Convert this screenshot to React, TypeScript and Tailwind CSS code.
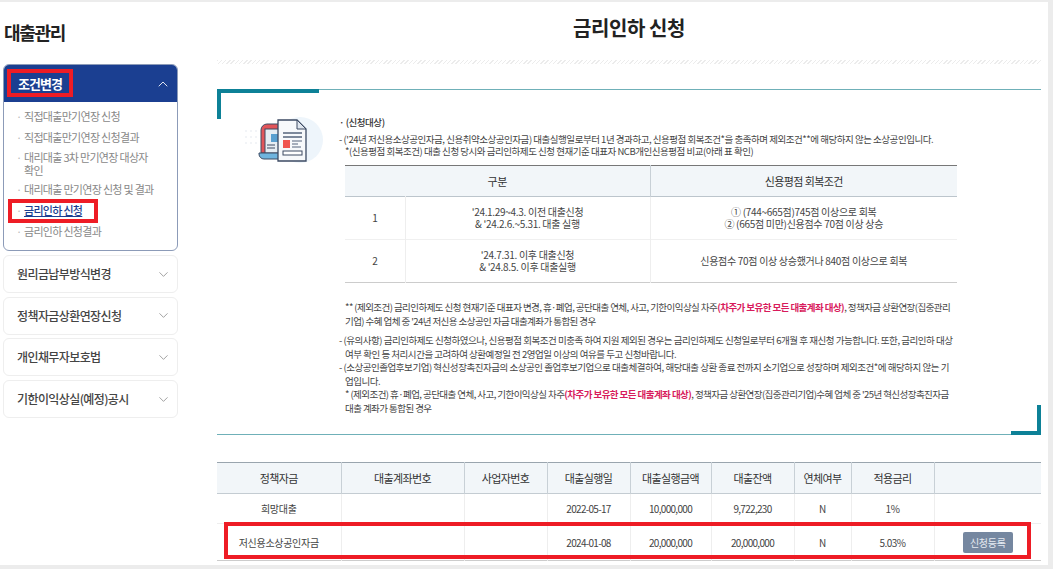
import { ChevronDown, ChevronUp } from 'lucide-react';

const font = { fontFamily: '"Noto Sans CJK KR", "Noto Sans", sans-serif' };

const subMenu = [
    { label: '직접대출만기연장 신청' },
    { label: '직접대출만기연장 신청결과' },
    { label: '대리대출 3차 만기연장 대상자 확인' },
    { label: '대리대출 만기연장 신청 및 결과' },
    { label: '금리인하 신청', active: true },
    { label: '금리인하 신청결과' },
];

const closedMenu = ['원리금납부방식변경', '정책자금상환연장신청', '개인채무자보호법', '기한이익상실(예정)공시'];

const loans = [
    { name: '희망대출', date: '2022-05-17', amount: '10,000,000', balance: '9,722,230', overdue: 'N', rate: '1%' },
    { name: '저신용소상공인자금', date: '2024-01-08', amount: '20,000,000', balance: '20,000,000', overdue: 'N', rate: '5.03%', apply: true },
];

const DocIcon = () => (
    <svg width="86" height="50" viewBox="-10 0 86 50" fill="none">
        <circle cx="46" cy="25" r="23" fill="#eef5fb" />
        <g fill="#eef1f4">
            <circle cx="-8" cy="16" r="1" /><circle cx="-3" cy="16" r="1" /><circle cx="2" cy="16" r="1" />
            <circle cx="-8" cy="22" r="1" /><circle cx="-3" cy="22" r="1" /><circle cx="2" cy="22" r="1" />
            <circle cx="-8" cy="28" r="1" /><circle cx="-3" cy="28" r="1" /><circle cx="2" cy="28" r="1" />
        </g>
        <path d="M7 38V15a6 6 0 0 1 6-6h12v29z" fill="#e2555a" stroke="#3c4a63" strokeWidth="1" />
        <rect x="11" y="14" width="14" height="24" fill="#e6edf3" stroke="#3c4a63" strokeWidth="1" />
        <rect x="17" y="19" width="7" height="8" fill="#5aa0d0" />
        <path d="M13 30h8M13 33h8" stroke="#3c4a63" strokeWidth="1" />
        <path d="M5 38h20v6H10a5 5 0 0 1-5-5z" fill="#6fb4de" stroke="#3c4a63" strokeWidth="1" />
        <path d="M24 5h19l9 9v32H24z" fill="#f7f9fb" stroke="#3c4a63" strokeWidth="1.3" />
        <path d="M43 5v9h9z" fill="#dfe6ee" stroke="#3c4a63" strokeWidth="1" />
        <path d="M29 18h19M29 22h19" stroke="#56647c" strokeWidth="1.3" />
        <rect x="29" y="25" width="7" height="8" fill="#f0554f" />
        <path d="M38 26h10M38 29h6M38 32h9" stroke="#56647c" strokeWidth="1" />
        <rect x="29" y="36" width="19" height="4" fill="#fff" stroke="#3c4a63" strokeWidth="1" />
    </svg>
);

const App = () => {
    return (
        <div className="w-[1053px] h-[569px] overflow-hidden bg-[#ececec] pt-[2px] pr-[5px] pb-[4px] text-[#333]" style={font}>
            <div className="relative flex h-full bg-white">
                <aside className="w-[217px] shrink-0 pl-[3px] pt-[17px]">
                    <h2 className="h-[27px] pl-[1px] text-[18px] leading-[27px] font-bold text-[#222] tracking-[-1.3px]">대출관리</h2>
                    <div className="mt-[18px] w-[175px] rounded-[6px] border border-[#8c9bb8] overflow-hidden">
                        <div className="flex h-[37px] items-center justify-between bg-[#1b3f91] pl-[14px] pr-[6px] text-white">
                            <span className="text-[13px] font-bold tracking-[-1px]">조건변경</span>
                            <ChevronUp size={16} strokeWidth={1.3} />
                        </div>
                        <ul className="pl-[12px] pr-[18px] pt-[4px] pb-[8px]">
                            {subMenu.map(item => (
                                <li key={item.label} className={`relative break-keep pl-[8px] text-[11px] leading-[13px] tracking-[-0.7px] ${item.label.includes('3차') ? 'py-[2.5px]' : 'py-[4px]'}`}>
                                    <span className="absolute left-0 text-[#bbb]">·</span>
                                    <span className={item.active ? 'font-medium text-[#1b3f91] underline' : 'text-[#888]'}>{item.label}</span>
                                </li>
                            ))}
                        </ul>
                    </div>
                    <div className="mt-[4px] flex w-[175px] flex-col gap-[3.7px]">
                        {closedMenu.map(label => (
                            <div key={label} className="flex h-[38px] items-center justify-between rounded-[6px] border border-[#eeeeee] pl-[13px] pr-[6px]">
                                <span className="text-[12px] font-medium text-[#444] tracking-[-0.6px]">{label}</span>
                                <ChevronDown size={15} strokeWidth={1.1} className="text-[#777]" />
                            </div>
                        ))}
                    </div>
                </aside>

                <main className="flex-1 min-w-0 pr-[7px]">
                    <h1 className="h-[58px] pt-[12px] text-center text-[20px] leading-[27px] font-bold text-[#222] tracking-[-0.4px]">금리인하 신청</h1>
                    <div className="h-[4px] bg-[repeating-linear-gradient(135deg,#ececec_0px,#ececec_1px,#ffffff_1px,#ffffff_3px)]" />

                    <section className="relative mt-[25px] h-[346px] border-y border-[#6fb0b8]">
                        <span className="absolute -top-px left-0 h-[4px] w-[102px] bg-[#0d8197]" />
                        <span className="absolute -top-px left-0 h-[30px] w-[4px] bg-[#0d8197]" />
                        <span className="absolute -bottom-px right-0 h-[30px] w-[4px] bg-[#0d8197]" />
                        <span className="absolute -bottom-px right-0 h-[4px] w-[30px] bg-[#0d8197]" />

                        <div className="flex">
                            <div className="w-[117px] shrink-0 pt-[25px] pl-[27px]"><DocIcon /></div>
                            <div className="w-[622px] pt-[26px] text-[9.5px] leading-[12px] tracking-[-0.47px] text-[#444]">
                                <p className="pl-[5px] font-medium text-[#333]">· (신청대상)</p>
                                <p className="mt-[5px] pl-[5px]">- ('24년 저신용소상공인자금, 신용취약소상공인자금) 대출실행일로부터 1년 경과하고, 신용평점 회복조건*을 충족하며 제외조건**에 해당하지 않는 소상공인입니다.</p>
                                <p className="pl-[11px]">*(신용평점 회복조건) 대출 신청 당시와 금리인하제도 신청 현재기준 대표자 NCB개인신용평점 비교(아래 표 확인)</p>

                                <table className="mt-[8px] ml-[11px] w-[612px] table-fixed border-t border-b border-t-[#777] border-b-[#ccc] text-center text-[10px] tracking-[-0.3px]">
                                    <colgroup>
                                        <col className="w-[60px]" />
                                        <col className="w-[245px]" />
                                        <col />
                                    </colgroup>
                                    <thead>
                                        <tr className="h-[31px] border-b border-[#bcc5cc] bg-[#f2f6f9] text-[11px] text-[#333]">
                                            <th colSpan={2} className="font-normal border-r border-[#c8d0d6]">구분</th>
                                            <th className="font-normal tracking-[-0.6px]">신용평점 회복조건</th>
                                        </tr>
                                    </thead>
                                    <tbody>
                                        <tr className="h-[43px] border-b border-[#f0f0f0]">
                                            <td className="border-r border-[#eeeeee]">1</td>
                                            <td className="border-r border-[#eeeeee]">'24.1.29~4.3. 이전 대출신청<br />& '24.2.6.~5.31. 대출 실행</td>
                                            <td>① (744~665점)745점 이상으로 회복<br />② (665점 미만)신용점수 70점 이상 상승</td>
                                        </tr>
                                        <tr className="h-[43px]">
                                            <td className="border-r border-[#eeeeee]">2</td>
                                            <td className="border-r border-[#eeeeee]">'24.7.31. 이후 대출신청<br />& '24.8.5. 이후 대출실행</td>
                                            <td>신용점수 70점 이상 상승했거나 840점 이상으로 회복</td>
                                        </tr>
                                    </tbody>
                                </table>

                                <div className="mt-[18px] pl-[11px] leading-[13.5px] tracking-[-0.56px]">
                                    <p>** (제외조건) 금리인하제도 신청 현재기준 대표자 변경, 휴·폐업, 공단대출 연체, 사고, 기한이익상실 차주<b className="font-bold text-[#d81b5c]">(차주가 보유한 모든 대출계좌 대상)</b>, 정책자금 상환연장(집중관리<wbr />기업) 수혜 업체 중 '24년 저신용 소상공인 자금 대출계좌가 통합된 경우</p>
                                    <p className="mt-[6px] -indent-[6px] tracking-[-0.47px]">- (유의사항) 금리인하제도 신청하였으나, 신용평점 회복조건 미충족 하여 지원 제외된 경우는 금리인하제도 신청일로부터 6개월 후 재신청 가능합니다. 또한, 금리인하 대상 여부 확인 등 처리시간을 고려하여 상환예정일 전 2영업일 이상의 여유를 두고 신청바랍니다.</p>
                                    <p className="-indent-[6px] tracking-[-0.47px]">- (소상공인졸업후보기업) 혁신성장촉진자금의 소상공인 졸업후보기업으로 대출체결하여, 해당대출 상환 종료 전까지 소기업으로 성장하며 제외조건*에 해당하지 않는 기업입니다.</p>
                                    <p>* (제외조건) 휴·폐업, 공단대출 연체, 사고, 기한이익상실 차주<b className="font-bold text-[#d81b5c]">(차주가 보유한 모든 대출계좌 대상)</b>, 정책자금 상환연장(집중관리기업)수혜 업체 중 '25년 혁신성장촉진자금 대출 계좌가 통합된 경우</p>
                                </div>
                            </div>
                        </div>
                    </section>

                    <table className="mt-[27px] w-full table-fixed border-t border-b border-t-[#9aa5ae] border-b-[#ccc] text-center text-[10px] tracking-[-0.3px] text-[#444]">
                        <thead>
                            <tr className="h-[31px] border-b border-[#c4ccd2] bg-[#f2f6f9] text-[11px] tracking-[-0.6px] text-[#333]">
                                <th className="w-[124px] font-normal border-r border-[#c8d0d6]">정책자금</th>
                                <th className="w-[123px] font-normal border-r border-[#c8d0d6]">대출계좌번호</th>
                                <th className="w-[83px] font-normal border-r border-[#c8d0d6]">사업자번호</th>
                                <th className="w-[83px] font-normal border-r border-[#c8d0d6]">대출실행일</th>
                                <th className="w-[81px] font-normal border-r border-[#c8d0d6]">대출실행금액</th>
                                <th className="w-[83px] font-normal border-r border-[#c8d0d6]">대출잔액</th>
                                <th className="w-[57px] font-normal border-r border-[#c8d0d6]">연체여부</th>
                                <th className="w-[83px] font-normal border-r border-[#c8d0d6]">적용금리</th>
                                <th className="font-normal" />
                            </tr>
                        </thead>
                        <tbody>
                            {loans.map(loan => (
                                <tr key={loan.name} className={`border-b border-[#eeeeee] last:border-b-0 ${loan.apply ? 'h-[37px]' : 'h-[30px]'}`}>
                                    <td className="border-r border-[#eeeeee]">{loan.name}</td>
                                    <td className="border-r border-[#eeeeee]" />
                                    <td className="border-r border-[#eeeeee]" />
                                    <td className="border-r border-[#eeeeee] tracking-[-0.7px]">{loan.date}</td>
                                    <td className="border-r border-[#eeeeee] tracking-[-0.7px]">{loan.amount}</td>
                                    <td className="border-r border-[#eeeeee] tracking-[-0.7px]">{loan.balance}</td>
                                    <td className="border-r border-[#eeeeee]">{loan.overdue}</td>
                                    <td className="border-r border-[#eeeeee] tracking-[-0.5px]">{loan.rate}</td>
                                    <td>
                                        {loan.apply && (
                                            <button className="h-[21px] w-[50px] rounded-[2px] bg-[#7587a0] text-[10px] text-[#e6ebf2]">신청등록</button>
                                        )}
                                    </td>
                                </tr>
                            ))}
                        </tbody>
                    </table>
                </main>

                {/* 빨간 강조 표시 */}
                <span className="pointer-events-none absolute left-[7px] top-[67px] h-[28px] w-[66px] border-[4px] border-[#ee1c25]" />
                <span className="pointer-events-none absolute left-[8px] top-[197px] h-[24px] w-[90px] border-[4px] border-[#ee1c25]" />
                <span className="pointer-events-none absolute left-[224px] top-[520px] h-[37px] w-[807px] border-[4px] border-[#ee1c25]" />
            </div>
        </div>
    );
};

export default App;
